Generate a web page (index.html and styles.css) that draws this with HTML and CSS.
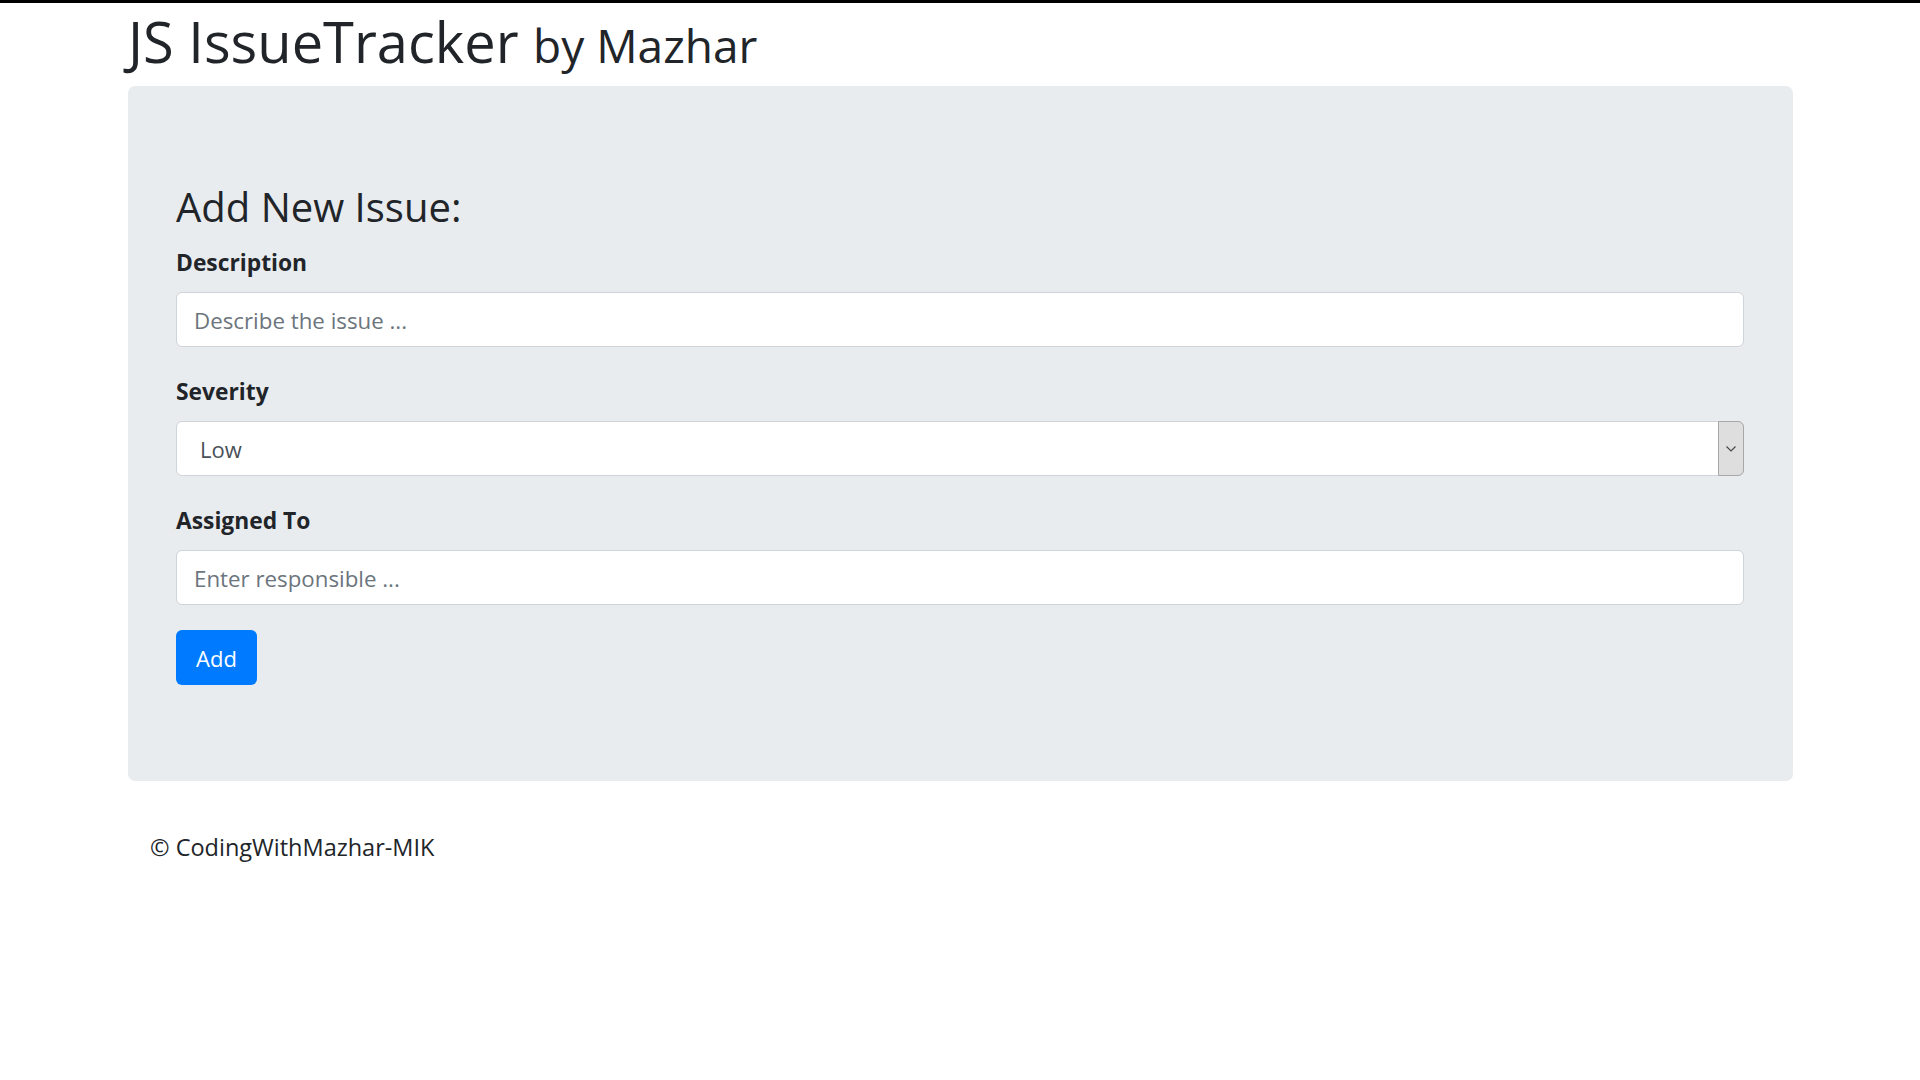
FILE: index.html
```html
<!DOCTYPE html>
<html lang="en">
<head>
<meta charset="utf-8">
<title>JS IssueTracker</title>
<link rel="stylesheet" href="styles.css">
</head>
<body>
<div class="page">
  <h1 class="title">JS IssueTracker <span class="by">by Mazhar</span></h1>
  <div class="jumbotron">
    <h3 class="form-title">Add New Issue:</h3>
    <form class="issue-form">
      <div class="form-group">
        <label class="label" for="desc">Description</label>
        <input class="input" id="desc" type="text" placeholder="Describe the issue ...">
      </div>
      <div class="form-group">
        <label class="label" for="sev">Severity</label>
        <div class="select-wrap">
          <select class="select" id="sev">
            <option>Low</option>
            <option>Medium</option>
            <option>High</option>
          </select>
          <span class="select-arrow">
            <svg width="10" height="6" viewBox="0 0 10 6"><path d="M0.5 0.5 L5 5 L9.5 0.5" fill="none" stroke="#444" stroke-width="1.1"/></svg>
          </span>
        </div>
      </div>
      <div class="form-group">
        <label class="label" for="assigned">Assigned To</label>
        <input class="input" id="assigned" type="text" placeholder="Enter responsible ...">
      </div>
      <button class="btn" type="button">Add</button>
    </form>
  </div>
  <footer class="footer">© CodingWithMazhar-MIK</footer>
</div>
</body>
</html>
```
FILE: styles.css
```css
* { box-sizing: border-box; }

body {
  margin: 0;
  border-top: 3px solid #000;
  background: #fff;
  color: #212529;
  font-family: "Open Sans", "Noto Sans", sans-serif;
}

.page {
  padding: 0 127px 0 128px;
}

.title {
  margin: 0;
  padding-top: 3px;
  font-size: 56px;
  line-height: 70px;
  height: 73px;
  font-weight: 400;
  color: #212529;
}

.by {
  font-size: 46px;
  line-height: 1;
}

.jumbotron {
  margin-top: 10px;
  padding: 96px 49px 96px 48px;
  background: #e9ecef;
  border-radius: 7px;
}

.form-title {
  margin: 0 0 14px;
  font-size: 40px;
  line-height: 50px;
  font-weight: 400;
}

.form-group {
  margin-bottom: 28px;
}

.label {
  display: block;
  margin-bottom: 13px;
  font-size: 22.8px;
  line-height: 33px;
  font-weight: 700;
}

.input,
.select {
  display: block;
  width: 100%;
  height: 55px;
  padding: 1px 17px 0;
  border: 1px solid #ced4da;
  border-radius: 6px;
  background: #fff;
  font-family: "Open Sans", "Noto Sans", sans-serif;
  font-size: 22.3px;
  color: #495057;
  outline: none;
}

.input::placeholder {
  color: #6c757d;
  opacity: 1;
}

.select-wrap {
  position: relative;
}

.select {
  appearance: none;
  -webkit-appearance: none;
  padding-left: 23px;
  font-size: 22px;
}

.select-arrow {
  position: absolute;
  top: 0;
  right: 0;
  width: 26px;
  height: 100%;
  display: flex;
  align-items: center;
  justify-content: center;
  background: #dedede;
  border: 1px solid #a8a8a8;
  border-radius: 0 6px 6px 0;
  pointer-events: none;
}

.btn {
  display: block;
  margin-top: -3px;
  width: 81px;
  height: 55px;
  padding: 0;
  border: 0;
  border-radius: 6px;
  background: #007bff;
  color: #fff;
  font-family: "Open Sans", "Noto Sans", sans-serif;
  font-size: 22px;
  text-align: center;
}

.footer {
  margin-top: 50px;
  padding-left: 22px;
  font-size: 23.5px;
  line-height: 33px;
}
```
